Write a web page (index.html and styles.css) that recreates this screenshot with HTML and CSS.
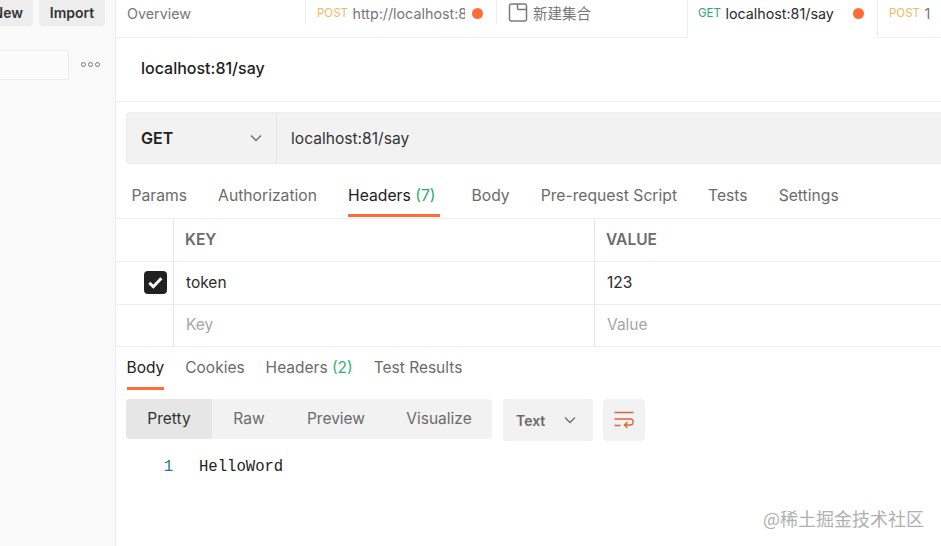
FILE: index.html
```html
<!DOCTYPE html>
<html lang="zh">
<head>
<meta charset="utf-8">
<title>localhost:81/say</title>
<link rel="stylesheet" href="styles.css">
</head>
<body>
<div class="app">
  <aside class="sidebar">
    <div class="side-actions">
      <button class="side-btn new-btn">New</button>
      <button class="side-btn import-btn">Import</button>
    </div>
    <div class="side-search">
      <div class="search-box"></div>
      <div class="more"><i></i><i></i><i></i></div>
    </div>
  </aside>
  <main class="main">
    <nav class="tabs">
      <div class="tab tab-overview"><span class="tab-name">Overview</span></div>
      <div class="tab tab-post"><span class="verb post">POST</span><span class="tab-name clip">http://localhost:8</span><span class="dot"></span></div>
      <div class="tab tab-coll">
        <svg class="coll-icon" width="20" height="20" viewBox="0 0 20 20" fill="none" stroke="#7a7a7a" stroke-width="1.5"><path d="M3.200 1h13.600c.9 0 1.700.8 1.700 1.700v13.600c0 .9-.8 1.700-1.700 1.700H3.200c-.9 0-1.700-.8-1.700-1.700V2.700c0-.9.8-1.700 1.700-1.700z"/><path d="M9.500 1v4.500c0 .6.5 1 1 1h8"/></svg>
        <span class="tab-name cjk">新建集合</span>
      </div>
      <div class="tab tab-active"><span class="verb get">GET</span><span class="tab-name dark">localhost:81/say</span><span class="dot"></span></div>
      <div class="tab tab-last"><span class="verb post">POST</span><span class="tab-name">1</span></div>
    </nav>
    <header class="title-row"><h1 class="title">localhost:81/say</h1></header>
    <section class="url-bar">
      <div class="method"><span>GET</span>
        <svg width="14" height="14" viewBox="0 0 14 14" fill="none" stroke="#6b6b6b" stroke-width="1.300"><path d="M2 4.500l5 5 5-5"/></svg>
      </div>
      <div class="url">localhost:81/say</div>
    </section>
    <div class="req-tabs">
      <span class="rt">Params</span>
      <span class="rt">Authorization</span>
      <span class="rt rt-active">Headers <em class="count">(7)</em></span>
      <span class="rt">Body</span>
      <span class="rt">Pre-request Script</span>
      <span class="rt">Tests</span>
      <span class="rt">Settings</span>
    </div>
    <div class="kv">
      <div class="kv-row kv-head"><div class="c0"></div><div class="c1">KEY</div><div class="c2">VALUE</div></div>
      <div class="kv-row"><div class="c0"><span class="check"><svg width="17" height="15" viewBox="0 0 16 14" fill="none" stroke="#fff" stroke-width="2.800"><path d="M2.200 7.300l3.800 3.700 7.500-8"/></svg></span></div><div class="c1 val">token</div><div class="c2 val">123</div></div>
      <div class="kv-row kv-last"><div class="c0"></div><div class="c1 ph">Key</div><div class="c2 ph">Value</div></div>
    </div>
    <div class="res-tabs">
      <span class="rs rs-active">Body</span>
      <span class="rs">Cookies</span>
      <span class="rs">Headers <em class="count-g">(2)</em></span>
      <span class="rs">Test Results</span>
    </div>
    <div class="toolbar">
      <div class="segment">
        <span class="seg seg-active">Pretty</span>
        <span class="seg seg-raw">Raw</span>
        <span class="seg seg-preview">Preview</span>
        <span class="seg seg-vis">Visualize</span>
      </div>
      <div class="lang"><span>Text</span>
        <svg width="14" height="14" viewBox="0 0 14 14" fill="none" stroke="#6b6b6b" stroke-width="1.300"><path d="M2 4.500l5 5 5-5"/></svg>
      </div>
      <div class="wrap">
        <svg width="22" height="20" viewBox="0 0 22 20" fill="none" stroke="#e0633a" stroke-width="1.300"><path d="M1.500 2.500h19M1.500 9h16c3.500 0 3.500 6 0 6h-6M14.500 12l-3.200 3 3.200 3M1.500 15.500h6"/></svg>
      </div>
    </div>
    <div class="code"><span class="ln">1</span><span class="code-text">HelloWord</span></div>
  </main>
</div>
<div class="watermark">@稀土掘金技术社区</div>
</body>
</html>
```

FILE: styles.css
```css
* { box-sizing: border-box; }
html, body { margin: 0; height: 100%; overflow: hidden; background: #fff; }
body { font-family: Inter, "Noto Sans CJK SC", sans-serif; font-size: 16px; color: #6b6b6b; }
.app { display: flex; width: 941px; height: 546px; }

.sidebar { width: 116px; flex: none; margin-right: -1px; background: #f9f9f9; border-right: 1px solid #ececec; padding-right: 10px; overflow: hidden; }
.side-actions { display: flex; justify-content: flex-end; gap: 6px; height: 26px; }
.side-btn { flex: none; height: 26px; border: 0; border-radius: 0 0 4px 4px; background: #ededed; color: #333; font: 600 14px Inter, sans-serif; padding: 0 0 2px; }
.new-btn { width: 60px; text-align: right; padding-right: 10px; }
.import-btn { width: 66px; }
.side-search { display: flex; align-items: center; margin-top: 24px; }
.search-box { flex: none; width: 69px; height: 30px; background: #fbfbfb; border: 1px solid #ededed; border-left: 0; border-radius: 0 3px 3px 0; }
.more { display: flex; gap: 2px; margin: -2px 0 0 12px; }
.more i { width: 5px; height: 5px; border: 1px solid #777; border-radius: 50%; }

.main { flex: 1; min-width: 0; overflow: hidden; position: relative; }
.tabs { display: flex; height: 38px; border-bottom: 1px solid #ededed; font-size: 14.300px; }
.tab { display: flex; align-items: center; flex: none; height: 24px; padding-top: 2px; white-space: nowrap; position: relative; }
.tab-overview { width: 191px; padding-left: 12px; color: #777; border-right: 1px solid #ededed; }
.tab-post { width: 191px; padding-left: 11px; border-right: 1px solid #ededed; }
.tab-coll { width: 190px; padding-left: 11px; }
.verb { font-size: 11.500px; margin-right: 4.500px; }
.post { color: #f5b95f; }
.get { color: #2fa873; }
.clip { display: block; width: 113px; overflow: hidden; }
.tab-name { color: #777; }
.dark { color: #2b2b2b; }
.cjk { font-family: "Noto Sans CJK SC", sans-serif; font-size: 14.500px; margin: -2px 0 0 5px; }
.coll-icon { flex: none; }
.dot { width: 11px; height: 11px; border-radius: 50%; background: #ff6c37; flex: none; margin-left: 6.500px; }
.tab-active { width: 191px; height: 38px; padding: 0 0 12px 10px; background: #fff; border-left: 1px solid #ededed; border-right: 1px solid #ededed; z-index: 1; }
.tab-active .dot { margin-left: 19px; }
.tab-last { padding-left: 11px; }

.title-row { height: 64px; border-bottom: 1px solid #ededed; padding: 0 0 4px 26px; display: flex; align-items: center; }
.title { margin: 0; font-size: 16px; font-weight: 500; color: #212121; }

.url-bar { display: flex; height: 52px; margin: 10px 0 0 11px; background: #f2f2f2; border: 1px solid #ededed; border-right: 0; border-radius: 4px 0 0 4px; }
.method { width: 150px; display: flex; align-items: center; justify-content: space-between; padding: 0 13px 0 14px; border-right: 1px solid #e6e6e6; font-size: 16px; font-weight: 600; color: #212121; }
.url { padding-left: 14px; display: flex; align-items: center; font-size: 15.600px; color: #333; }

.req-tabs { display: flex; gap: 31px; height: 55px; padding: 8px 0 0 16.500px; border-bottom: 1px solid #ededed; align-items: center; font-size: 15.700px; color: #6b6b6b; }
.rt { position: relative; white-space: nowrap; }
.rt-active { color: #212121; margin-right: 5px; }
.rt-active::after { content: ""; position: absolute; left: 0; right: -5px; top: 28px; height: 3px; background: #ff6c37; }
.count { font-style: normal; color: #2fa873; }

.kv-row { display: grid; grid-template-columns: 58px 421px 1fr; height: 43px; border-bottom: 1px solid #ededed; }
.kv-last { height: 42px; }
.kv-row > div { display: flex; align-items: center; padding-bottom: 2px; }
.kv-row > .c0 { padding-bottom: 1px; }
.c1, .c2 { padding-left: 12px; border-left: 1px solid #e6e6e6; }
.kv-head .c1, .kv-head .c2 { padding-left: 11px; }
.c0 { justify-content: flex-end; padding-right: 6px; }
.kv-head { font-size: 15.500px; font-weight: 600; color: #6b6b6b; }
.val { color: #2b2b2b; font-size: 15.500px; }
.ph { color: #a6a6a6; font-size: 15.500px; }
.check { width: 23px; height: 23px; border-radius: 4px; background: #212121; display: flex; align-items: center; justify-content: center; }

.res-tabs { display: flex; gap: 21px; height: 42px; padding: 0 0 2px 11.500px; align-items: center; font-size: 15.500px; color: #6b6b6b; }
.rs { position: relative; white-space: nowrap; }
.rs-active { color: #212121; }
.rs-active::after { content: ""; position: absolute; left: 0; right: 0; top: 29px; height: 3px; background: #ff6c37; }
.count-g { font-style: normal; color: #2fb36f; }

.toolbar { display: flex; gap: 10px; margin: 10px 0 0 11px; height: 42px; }
.segment { display: flex; width: 366px; height: 40px; background: #f2f2f2; border-radius: 4px; overflow: hidden; font-size: 15.500px; color: #6b6b6b; }
.seg { display: flex; align-items: center; justify-content: center; padding-bottom: 1px; }
.seg-active { width: 86px; background: #e6e6e6; color: #333; }
.seg-raw { width: 74px; }
.seg-preview { width: 100px; }
.seg-vis { width: 106px; }
.lang { width: 90px; margin-left: 1px; background: #f2f2f2; border-radius: 4px; display: flex; align-items: center; justify-content: space-between; padding: 0 16px 0 13px; font-size: 14px; font-weight: 600; color: #6b6b6b; }
.wrap { width: 42px; background: #f2f2f2; border-radius: 4px; display: flex; align-items: center; justify-content: center; }

.code { display: flex; margin-top: 16px; font-family: "Liberation Mono", monospace; font-size: 15.600px; line-height: 20px; }
.ln { width: 58px; text-align: right; color: #237893; }
.code-text { margin-left: 26px; color: #212121; }

.watermark { position: absolute; left: 763px; top: 505px; font-family: "Noto Sans CJK SC", sans-serif; font-size: 18px; line-height: 26px; color: #b0b0b0; white-space: nowrap; }
```
